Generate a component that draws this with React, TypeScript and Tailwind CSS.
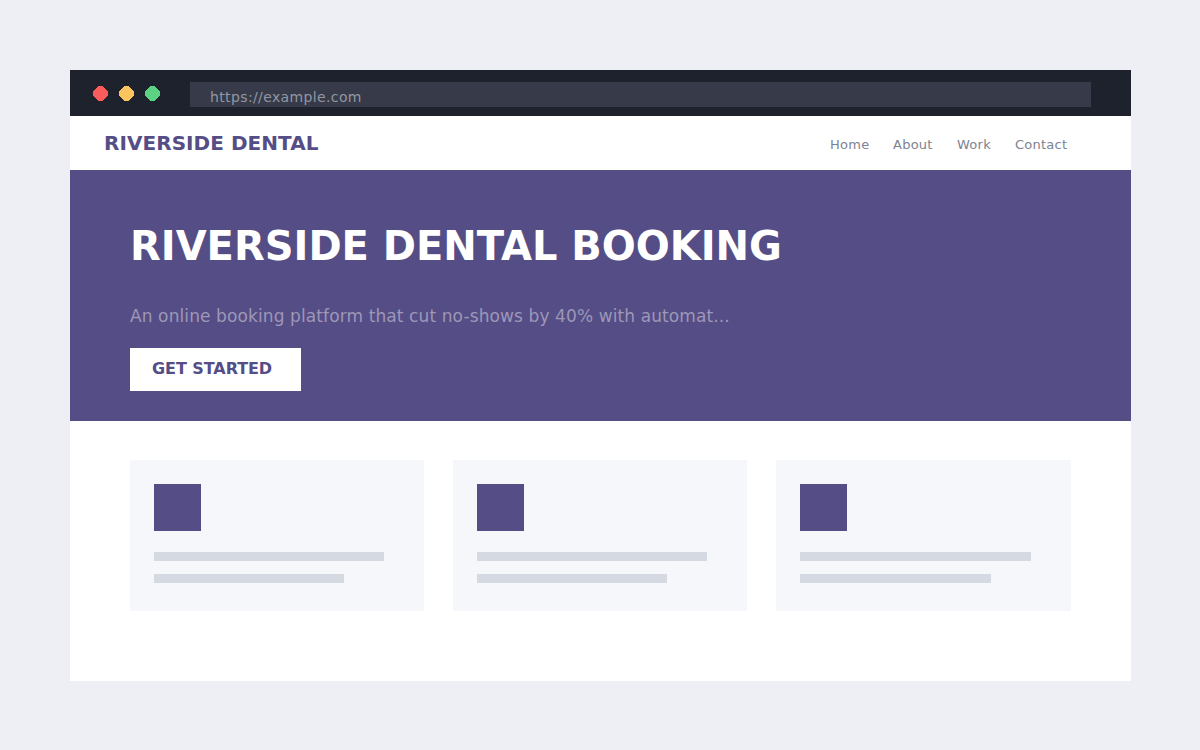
const cards = [
  { card: "w-[294px] mr-[29px]", long: "w-[230px]", short: "w-[190px]" },
  { card: "w-[294px] mr-[29px]", long: "w-[230px]", short: "w-[190px]" },
  { card: "w-[295px]", long: "w-[231px]", short: "w-[191px]" },
];

const dots = ["#fa5c5c", "#fac45e", "#5cd282"];

export default function App() {
  return (
    <div className="h-[750px] w-[1200px] overflow-hidden bg-[#eeeff5] pt-[70px] pl-[70px] font-['DejaVu_Sans',sans-serif]">
      <main className="h-[611px] w-[1061px] bg-white">
        <div className="flex h-[46px] items-start bg-[#1e222c] pt-3 pl-[23px]">
          <div className="mt-1 flex w-[97px] gap-[11px]">
            {dots.map((c) => (
              <svg key={c} width="15" height="15" viewBox="0 0 15 15" shapeRendering="crispEdges">
                <path d="M5 0H10V1H11V2H12V3H13V4H14V5H15V10H14V11H13V12H12V13H11V14H10V15H5V14H4V13H3V12H2V11H1V10H0V5H1V4H2V3H3V2H4V1H5Z" fill={c} />
              </svg>
            ))}
          </div>
          <div className="h-[25px] w-[901px] bg-[#373b49] pl-5 text-[14px] leading-[30px] tracking-[0.37px] text-[#9196a3]">
            https://example.com
          </div>
        </div>
        <header className="flex h-[54px] justify-between pl-[34px] text-[#554d85]">
          <div className="text-[20px] leading-[54px] font-bold tracking-[0.05px]">RIVERSIDE DENTAL</div>
          <nav className="flex w-[301px] text-[13px] leading-[57px] tracking-[0.25px] text-[#7d8291]">
            <span className="w-[63px]">Home</span>
            <span className="w-[64px]">About</span>
            <span className="w-[58px]">Work</span>
            <span>Contact</span>
          </nav>
        </header>
        <section className="h-[251px] bg-[#554d85] pt-[52px] pl-[60px] text-white">
          <h1 className="h-[84px] text-[40px] leading-[48px] font-bold tracking-[-0.01px]">RIVERSIDE DENTAL BOOKING</h1>
          <p className="h-[42px] text-[17px] leading-5 tracking-[0.105px] text-[#9d97b8]">
            An online booking platform that cut no-shows by 40% with automat...
          </p>
          <button className="h-[43px] w-[171px] bg-white pl-[22px] text-left text-[16px] leading-[42px] font-bold tracking-[-0.07px] text-[#554d85]">
            <span className="block h-full">GET STARTED</span>
          </button>
        </section>
        <section className="flex pt-[39px] pl-[60px]">
          {cards.map((c, i) => (
            <div key={i} className={`h-[151px] bg-[#f5f7fb] pt-6 pl-6 ${c.card}`}>
              <div className="mb-[21px] size-[47px] bg-[#554d85]" />
              <div className={`mb-[13px] h-[9px] bg-[#d5dae2] ${c.long}`} />
              <div className={`h-[9px] bg-[#d5dae2] ${c.short}`} />
            </div>
          ))}
        </section>
      </main>
    </div>
  );
}
